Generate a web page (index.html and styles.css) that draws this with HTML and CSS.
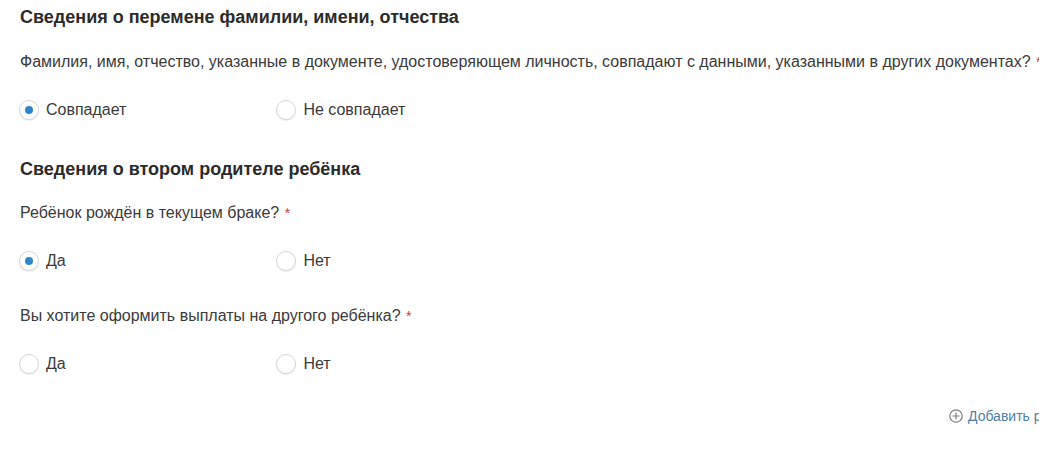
FILE: index.html
```html
<!DOCTYPE html>
<html lang="ru">
  <head>
    <meta charset="UTF-8" />
    <title>Сведения о ребёнке</title>
    <link rel="stylesheet" href="styles.css">
  </head>
  <body>
    <div class="container">
      <h2>Сведения о перемене фамилии, имени, отчества</h2>
      <p class="question">Фамилия, имя, отчество, указанные в документе, удостоверяющем личность, совпадают с данными, указанными в других документах? <span class="required">*</span></p>
      <div class="radios">
        <label class="radio"><span class="mark checked"></span>Совпадает</label>
        <label class="radio"><span class="mark"></span>Не совпадает</label>
      </div>

      <h2 class="second">Сведения о втором родителе ребёнка</h2>
      <p class="question">Ребёнок рождён в текущем браке? <span class="required">*</span></p>
      <div class="radios">
        <label class="radio"><span class="mark checked"></span>Да</label>
        <label class="radio"><span class="mark"></span>Нет</label>
      </div>

      <p class="question next">Вы хотите оформить выплаты на другого ребёнка? <span class="required">*</span></p>
      <div class="radios">
        <label class="radio"><span class="mark"></span>Да</label>
        <label class="radio"><span class="mark"></span>Нет</label>
      </div>

      <div class="add-row">
        <a class="add-link" href="#">
          <svg width="14" height="14" viewBox="0 0 14 14" fill="none" stroke="#7d7d7d" stroke-width="1.2">
            <circle cx="7" cy="7" r="6.2" />
            <path d="M7 3.4v7.2M3.4 7h7.2" />
          </svg>
          Добавить ребёнка
        </a>
      </div>
    </div>
  </body>
</html>
```

FILE: styles.css
```css
html,
body {
  height: 100%;
  overflow: hidden;
}
body {
  margin: 0;
  background-color: #fff;
  color: #3a3a3a;
  font-family: "Liberation Sans", Arial, sans-serif;
  font-size: 16px;
  line-height: 20px;
}
.container {
  width: 1200px;
  padding: 7px 0 0 20px;
  white-space: nowrap;
}
h2 {
  margin: 0;
  font-size: 18px;
  line-height: 20px;
  font-weight: bold;
  color: #2b2b2b;
}
h2.second {
  margin-top: 39px;
}
.question {
  margin: 25px 0 0;
}
.second + .question {
  margin-top: 24px;
}
.question.next {
  margin-top: 35px;
}
.required {
  margin-left: 1px;
  color: #b5433a;
  font-size: 14px;
}
.radios {
  display: grid;
  grid-template-columns: 257.4px 257px;
  margin-top: 28px;
  margin-left: -1px;
}
.radio {
  display: flex;
  align-items: center;
  gap: 7px;
}
.mark {
  box-sizing: border-box;
  display: flex;
  align-items: center;
  justify-content: center;
  width: 20px;
  height: 20px;
  border: 1px solid #d6d6d6;
  border-radius: 50%;
  background-color: #fff;
  box-shadow: 0 1px 1px rgba(0, 0, 0, 0.08);
}
.mark.checked::after {
  content: "";
  width: 8px;
  height: 8px;
  border-radius: 50%;
  background-color: #2f85c9;
}
.add-row {
  margin-top: 32px;
  padding-left: 929px;
}
.add-link {
  display: inline-flex;
  align-items: center;
  gap: 5px;
  color: #4f7ea8;
  font-size: 14px;
  text-decoration: none;
}
```
